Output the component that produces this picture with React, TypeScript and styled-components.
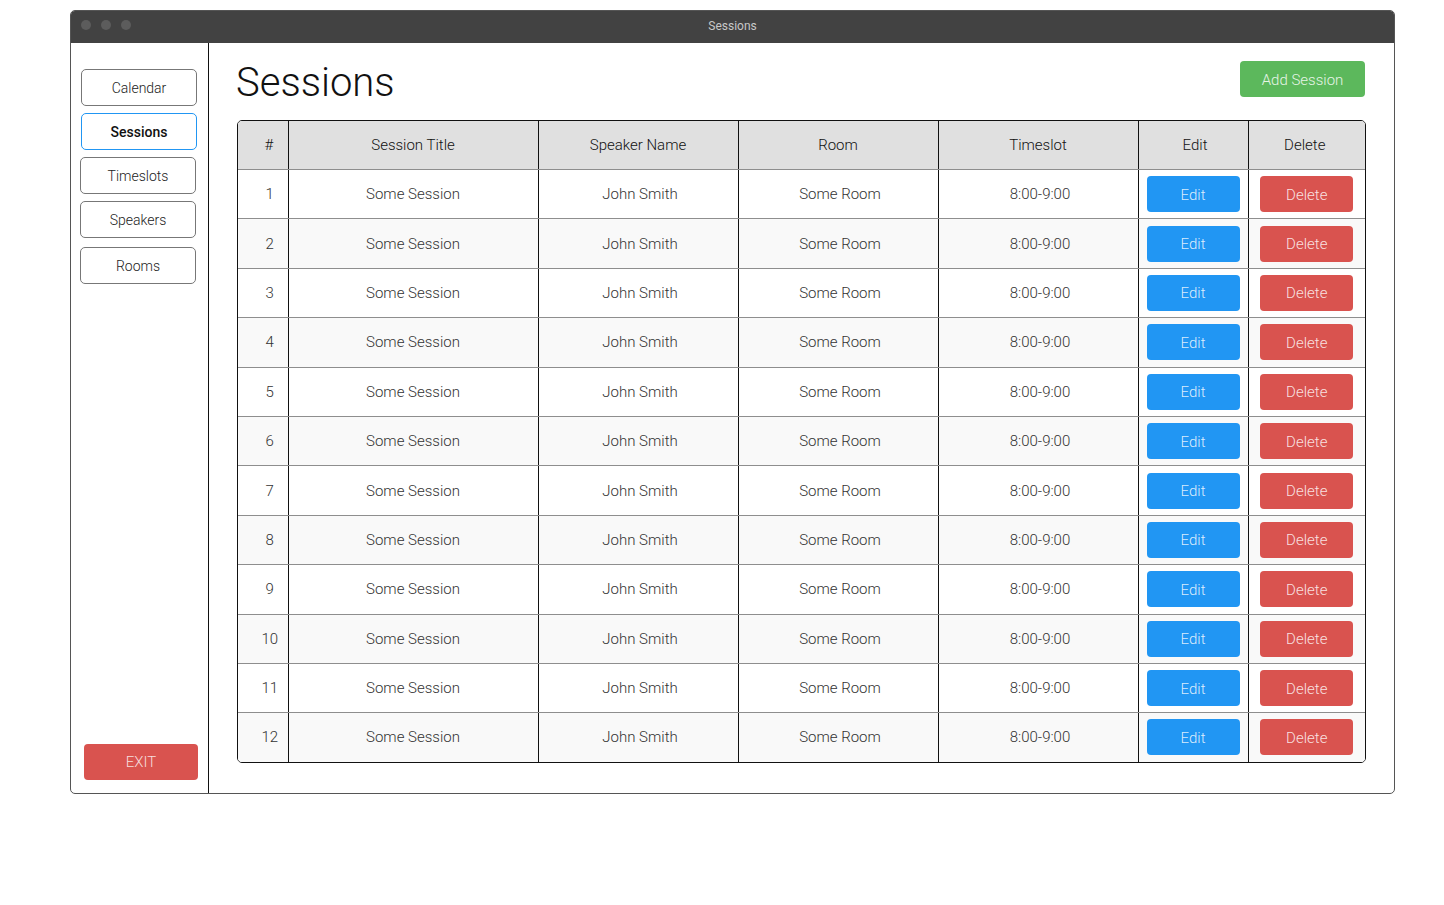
import { createGlobalStyle } from 'styled-components'
import styled from 'styled-components'

const GlobalStyle = createGlobalStyle`
  html, body {
    margin: 0;
    padding: 0;
    background: #fff;
    font-family: Roboto, "Liberation Sans", sans-serif;
    font-weight: 300;
    color: #333;
  }
`

const navItems = ['Calendar', 'Sessions', 'Timeslots', 'Speakers', 'Rooms']

const sessions = Array.from({ length: 12 }, (_, i) => ({
  id: i + 1,
  title: 'Some Session',
  speaker: 'John Smith',
  room: 'Some Room',
  timeslot: '8:00-9:00'
}))

const columns = [
  { label: '#', width: 50 },
  { label: 'Session Title', width: 250 },
  { label: 'Speaker Name', width: 200 },
  { label: 'Room', width: 200 },
  { label: 'Timeslot', width: 200 },
  { label: 'Edit', width: 110 },
  { label: 'Delete', width: 117 }
]

function App() {
  return (
    <>
      <GlobalStyle />
      <Page>
        <Window>
          <TitleBar>
            <Dots>
              <Dot />
              <Dot />
              <Dot />
            </Dots>
            <WindowTitle>Sessions</WindowTitle>
          </TitleBar>
          <Body>
            <Sidebar>
              <Nav>
                {navItems.map(item => (
                  <NavButton key={item} $active={item === 'Sessions'}>
                    {item}
                  </NavButton>
                ))}
              </Nav>
              <ExitButton>EXIT</ExitButton>
            </Sidebar>
            <Main>
              <Header>
                <Heading>Sessions</Heading>
                <AddButton>Add Session</AddButton>
              </Header>
              <TableFrame>
                <Table>
                  <colgroup>
                    {columns.map(c => (
                      <Col key={c.label} $width={c.width} />
                    ))}
                  </colgroup>
                  <thead>
                    <tr>
                      {columns.map(c => (
                        <HeadCell key={c.label}>{c.label}</HeadCell>
                      ))}
                    </tr>
                  </thead>
                  <tbody>
                    {sessions.map(s => (
                      <Row key={s.id} $striped={s.id % 2 === 0}>
                        <Cell>{s.id}</Cell>
                        <Cell>{s.title}</Cell>
                        <Cell>{s.speaker}</Cell>
                        <Cell>{s.room}</Cell>
                        <Cell>{s.timeslot}</Cell>
                        <Cell>
                          <ActionButton $color="#2196f3">Edit</ActionButton>
                        </Cell>
                        <Cell>
                          <ActionButton $color="#d9534f">Delete</ActionButton>
                        </Cell>
                      </Row>
                    ))}
                  </tbody>
                </Table>
              </TableFrame>
            </Main>
          </Body>
        </Window>
      </Page>
    </>
  )
}

const Page = styled.div`
  padding: 10px 49px 0 70px;
`

const Window = styled.div`
  width: 1325px;
  height: 784px;
  box-sizing: border-box;
  border: 1px solid #555;
  border-radius: 5px;
  overflow: hidden;
  display: flex;
  flex-direction: column;
  background: #fff;
`

const TitleBar = styled.div`
  height: 32px;
  flex: none;
  background: #424242;
  position: relative;
  display: flex;
  align-items: center;
  justify-content: center;
`

const Dots = styled.div`
  position: absolute;
  left: 10px;
  top: 9px;
  display: flex;
  gap: 10px;
`

const Dot = styled.span`
  width: 10px;
  height: 10px;
  border-radius: 50%;
  background: #5c5c5c;
`

const WindowTitle = styled.div`
  font-size: 12px;
  font-weight: 400;
  color: #c8c8c8;
  margin-top: -2px;
`

const Body = styled.div`
  flex: 1;
  display: flex;
  min-height: 0;
`

const Sidebar = styled.aside`
  width: 138px;
  flex: none;
  border-right: 1px solid #111;
  display: flex;
  flex-direction: column;
  justify-content: space-between;
  padding: 26px 0 13px 10px;
  box-sizing: border-box;
`

const Nav = styled.nav`
  display: flex;
  flex-direction: column;
  gap: 7px;
`

const NavButton = styled.button<{ $active?: boolean }>`
  width: 116px;
  height: 37px;
  box-sizing: border-box;
  background: #fff;
  border: 1px solid ${p => (p.$active ? '#2196f3' : '#777')};
  border-radius: 5px;
  font-family: inherit;
  font-size: 14px;
  font-weight: ${p => (p.$active ? 500 : 300)};
  color: ${p => (p.$active ? '#111' : '#222')};
  cursor: pointer;
  &:nth-child(n + 3) {
    margin-left: -1px;
  }
  &:last-child {
    margin-top: 2px;
  }
`

const ExitButton = styled.button`
  width: 114px;
  height: 36px;
  margin-left: 3px;
  border: none;
  border-radius: 4px;
  background: #d9534f;
  color: #f6dede;
  font-family: inherit;
  font-weight: 300;
  font-size: 15px;
  cursor: pointer;
`

const Main = styled.main`
  flex: 1;
  padding: 18px 30px 0 28px;
  display: flex;
  flex-direction: column;
`

const Header = styled.div`
  display: flex;
  justify-content: space-between;
  align-items: flex-start;
  height: 59px;
`

const Heading = styled.h1`
  margin: 0;
  margin-left: -1px;
  font-size: 40px;
  font-weight: 300;
  color: #111;
  line-height: 42px;
  padding-top: 1px;
`

const AddButton = styled.button`
  width: 125px;
  height: 36px;
  margin-right: 1px;
  padding-top: 2px;
  border: none;
  border-radius: 4px;
  background: #5cb85c;
  color: #e6f4e6;
  font-family: inherit;
  font-weight: 300;
  font-size: 15px;
  cursor: pointer;
`

const TableFrame = styled.div`
  width: 1127px;
  border: 1px solid #111;
  border-radius: 5px;
  overflow: hidden;
`

const Table = styled.table`
  width: 100%;
  border-collapse: collapse;
  table-layout: fixed;
`

const Col = styled.col<{ $width: number }>`
  width: ${p => p.$width}px;
`

const HeadCell = styled.th`
  height: 48px;
  background: #e0e0e0;
  font-weight: 300;
  font-size: 15px;
  color: #111;
  border-left: 1px solid #111;
  border-bottom: 1px solid #8e8e8e;
  padding: 0;
  &:first-child {
    border-left: none;
    padding-left: 12px;
  }
  &:nth-child(6) {
    padding-left: 4px;
  }
  &:nth-child(7) {
    padding-right: 4px;
  }
`

const Row = styled.tr<{ $striped?: boolean }>`
  background: ${p => (p.$striped ? '#f9f9f9' : '#fff')};
  &:not(:last-child) td {
    border-bottom: 1px solid #8e8e8e;
  }
`

const Cell = styled.td`
  height: 48.4px;
  padding: 0;
  text-align: center;
  font-size: 15px;
  color: #333;
  border-left: 1px solid #111;
  &:first-child {
    border-left: none;
    padding-left: 14px;
  }
  &:nth-child(3),
  &:nth-child(4),
  &:nth-child(5) {
    padding-left: 4px;
  }
`

const ActionButton = styled.button<{ $color: string }>`
  width: 93px;
  height: 36px;
  padding-top: 2px;
  border: none;
  border-radius: 4px;
  background: ${p => p.$color};
  color: rgba(255, 255, 255, 0.85);
  font-family: inherit;
  font-weight: 300;
  font-size: 15px;
  cursor: pointer;
`

export default App
